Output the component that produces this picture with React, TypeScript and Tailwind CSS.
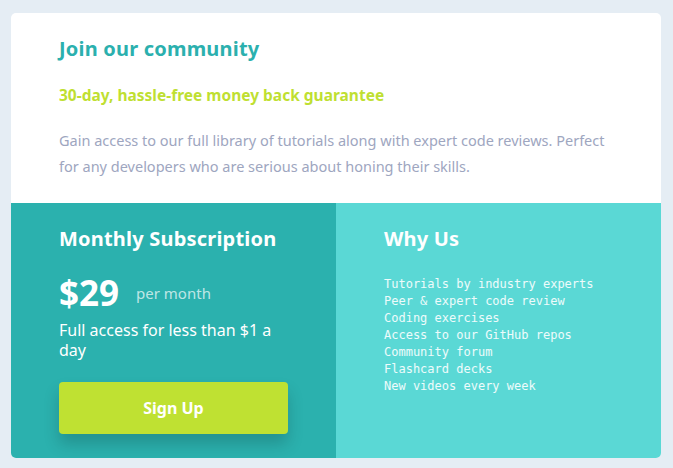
import { ReactNode } from 'react';

const features = [
  'Tutorials by industry experts',
  'Peer & expert code review',
  'Coding exercises',
  'Access to our GitHub repos',
  'Community forum',
  'Flashcard decks',
  'New videos every week',
];

const Heading = ({ children }: { children: ReactNode }) => (
  <h2 className="text-[20px] leading-7 font-bold tracking-[0.2px] text-white">
    {children}
  </h2>
);

export default function App() {
  return (
    <div className="min-h-screen bg-[#e5edf4] pt-[13px] pl-[11px] font-['Noto_Sans',sans-serif]">
      <div className="w-[650px] overflow-hidden rounded-[5px] bg-white">
        <div className="px-12 pt-[22px] pb-6">
          <h1 className="text-[20px] leading-7 font-bold tracking-[0.2px] text-[#2bb0ae]">
            Join our community
          </h1>
          <p className="mt-5 text-[15.5px] leading-6 font-bold text-[#bfdf32]">
            30-day, hassle-free money back guarantee
          </p>
          <p className="mt-5 text-[14.5px] leading-[26px] text-[#9ea6bf]">
            Gain access to our full library of tutorials along with expert code
            reviews. Perfect for any developers who are serious about honing
            their skills.
          </p>
        </div>

        <div className="grid grid-cols-2">
          <div className="bg-[#2bb1ae] px-12 pt-[22px] pb-6">
            <Heading>Monthly Subscription</Heading>
            <div className="mt-5 flex items-center gap-[17px]">
              <span className="text-[35px] leading-10 font-bold text-white">
                $29
              </span>
              <span className="text-[15px] text-white/70">per month</span>
            </div>
            <p className="mt-[7px] text-[16px] leading-5 text-white">
              Full access for less than $1 a day
            </p>
            <button className="mt-[22px] h-[52px] w-full rounded-[4px] bg-[#bfe132] text-[16px] font-bold text-white shadow-[0_10px_16px_rgba(0,0,0,0.18)]">
              Sign Up
            </button>
          </div>

          <div className="bg-[#5ad8d5] px-12 pt-[22px] pb-6">
            <Heading>Why Us</Heading>
            <ul className="mt-[23px] font-['DejaVu_Sans_Mono',monospace] text-[12px] leading-[17px] text-white/90">
              {features.map((f) => (
                <li key={f}>{f}</li>
              ))}
            </ul>
          </div>
        </div>
      </div>
    </div>
  );
}
